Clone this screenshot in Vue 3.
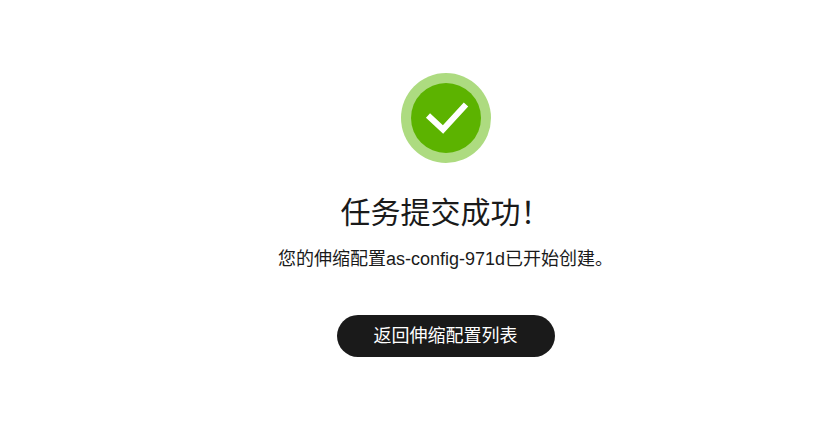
<template>
  <div class="result-page">
    <div class="status-icon">
      <div class="status-inner">
        <svg viewBox="0 0 70 70" width="70" height="70">
          <!-- 对勾 -->
          <polyline points="17,32.5 32,46.5 55,21.5" class="check" />
        </svg>
      </div>
    </div>
    <h1 class="title">任务提交成功！</h1>
    <p class="desc">您的伸缩配置as-config-971d已开始创建。</p>
    <button class="back-btn" type="button">返回伸缩配置列表</button>
  </div>
</template>

<script setup>
</script>

<style>
html, body {
  background: #fff;
}
</style>

<style scoped>
.result-page {
  box-sizing: border-box;
  width: 833px;
  height: 423px;
  padding: 73px 0 0 58px;
  display: flex;
  flex-direction: column;
  align-items: center;
  font-family: "Liberation Sans", "Noto Sans CJK SC", sans-serif;
  color: #1a1a1a;
}

.status-icon {
  width: 90px;
  height: 90px;
  border-radius: 50%;
  background: #addb80;
  display: flex;
  align-items: center;
  justify-content: center;
}

.status-inner {
  width: 70px;
  height: 70px;
  border-radius: 50%;
  background: #5cb300;
}

.status-inner svg {
  display: block;
}

.check {
  fill: none;
  stroke: #fff;
  stroke-width: 6;
}

.title {
  margin: 29px 0 0;
  font-size: 30px;
  line-height: 42px;
  font-weight: 400;
}

.desc {
  margin: 12px 0 0;
  font-size: 18px;
  line-height: 26px;
}

.back-btn {
  margin-top: 43px;
  width: 218px;
  height: 42px;
  border: none;
  border-radius: 21px;
  background: #1a1a1a;
  color: #fff;
  font-family: inherit;
  font-size: 18px;
  padding: 0 0 5px;
}
</style>
